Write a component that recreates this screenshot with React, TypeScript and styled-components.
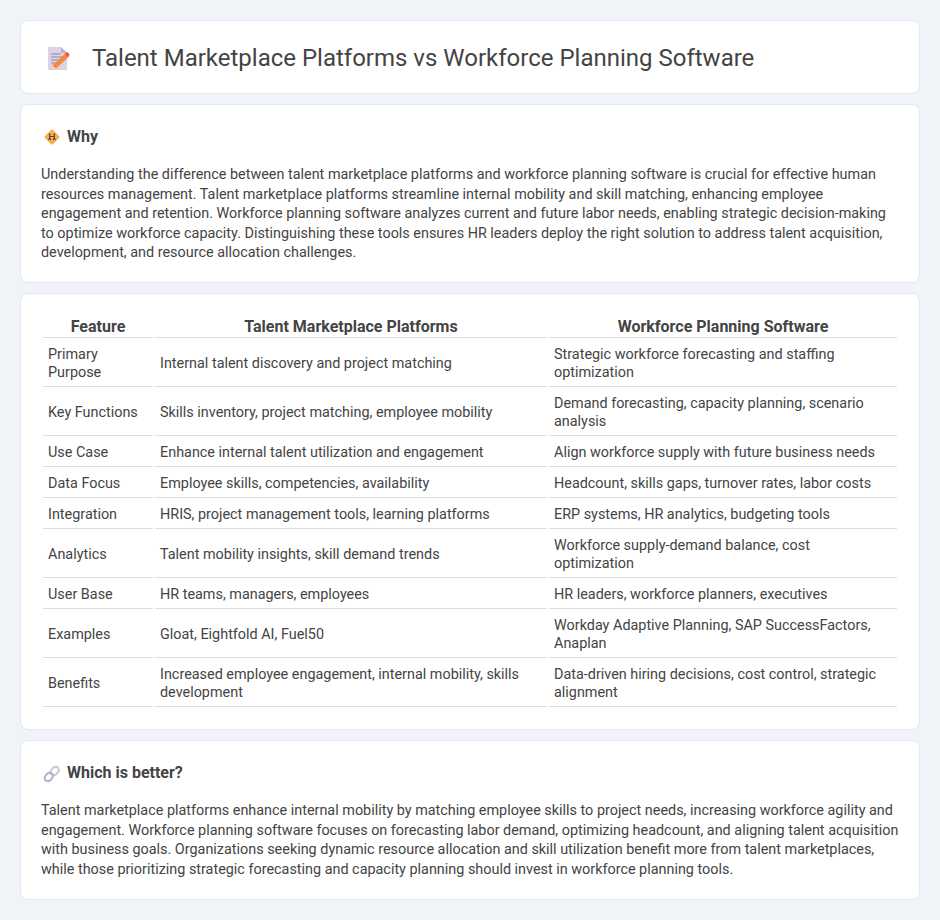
import React from "react";
import styled, { createGlobalStyle } from "styled-components";

const Global = createGlobalStyle`
  html, body { margin: 0; padding: 0; background: #f0f4f9; }
  body { font-family: Roboto, "Liberation Sans", sans-serif; color: #444; }
`;
const Page = styled.main`
  display: flex; flex-direction: column; gap: 10px; padding: 20px;
`;
const Card = styled.section`
  background: #fff; border: 1px solid #e2e8f0; border-radius: 8px; padding: 21px 20px 19.5px;
`;
const TitleCard = styled(Card)`
  display: flex; align-items: center; gap: 19px; padding: 18px 20px;
`;
const Title = styled.h1`
  margin: 0; padding-top: 2px; font-size: 24px; line-height: 34px; font-weight: 400; color: #444;
`;
const Heading = styled.h2`
  display: flex; align-items: center; gap: 6px; margin: 0 0 17px; font-size: 16px; line-height: 22px; font-weight: 700; color: #444;
`;
const Text = styled.p`
  margin: 0; font-size: 14.4px; line-height: 19.5px; color: #444;
`;
const TableCard = styled(Card)`
  padding: 20px;
`;
const Table = styled.table`
  width: 100%; table-layout: fixed; border-collapse: separate; border-spacing: 2px; font-size: 14.4px; line-height: 18px; color: #444;
`;
const Th = styled.th<{ $w?: string }>`
  padding: 0 5px; font-size: 16px; line-height: 21px; font-weight: 700; text-align: center; border-bottom: 1px solid #ddd; width: ${p => p.$w ?? "auto"};
`;
const Td = styled.td`
  padding: 6px 5px 4px; border-bottom: 1px solid #ddd; text-align: left;
`;

const DocIcon = () => (
  <svg width="32" height="32" viewBox="0 0 32 32">
    <path d="M7 6h13l6 6v17H7z" fill="#dcd3e6" />
    <path d="M20 6l6 6h-6z" fill="#bdb2cb" />
    <path d="M10 13h10M10 16h12M10 19h9M10 22h5" stroke="#8f8a9b" strokeWidth="1.1" />
    <path d="M11.500 24.500L23.500 13l3.500 3.500L15 27.500 10 29z" fill="#f58a3c" />
    <path d="M23.500 13l1.600-1.600a1.200 1.200 0 0 1 1.600 0l1.500 1.500a1.200 1.200 0 0 1 0 1.600L27 16.500z" fill="#f0564a" />
    <path d="M11.500 24.500l3.500 3-5 1.500z" fill="#f6d7ae" />
  </svg>
);
const WhyIcon = () => (
  <svg width="20" height="20" viewBox="0 0 20 20">
    <rect x="5.300" y="4.300" width="11.400" height="11.400" rx="1.500" transform="rotate(45 11 10)" fill="#f9ae4b" />
    <circle cx="8.700" cy="7.400" r="1" fill="#4d4347" />
    <circle cx="13.300" cy="7.400" r="1" fill="#4d4347" />
    <path d="M8.700 8.500v2.500M7.600 13l1.100-2 1.100 2M13.300 8.500v2.500M12.200 13l1.100-2 1.100 2M9 9.500h4" stroke="#4d4347" strokeWidth="1.100" fill="none" />
  </svg>
);
const LinkIcon = () => (
  <svg width="20" height="20" viewBox="0 0 20 20" fill="none">
    <rect x="10.500" y="3.500" width="6.500" height="9" rx="3.250" transform="rotate(45 13.750 8)" stroke="#cfc4d9" strokeWidth="2" />
    <rect x="4.500" y="9.500" width="6.500" height="9" rx="3.250" transform="rotate(45 7.750 14)" stroke="#b9aec6" strokeWidth="2" />
  </svg>
);

const rows: [string, string, string][] = [
  ["Primary Purpose", "Internal talent discovery and project matching", "Strategic workforce forecasting and staffing optimization"],
  ["Key Functions", "Skills inventory, project matching, employee mobility", "Demand forecasting, capacity planning, scenario analysis"],
  ["Use Case", "Enhance internal talent utilization and engagement", "Align workforce supply with future business needs"],
  ["Data Focus", "Employee skills, competencies, availability", "Headcount, skills gaps, turnover rates, labor costs"],
  ["Integration", "HRIS, project management tools, learning platforms", "ERP systems, HR analytics, budgeting tools"],
  ["Analytics", "Talent mobility insights, skill demand trends", "Workforce supply-demand balance, cost optimization"],
  ["User Base", "HR teams, managers, employees", "HR leaders, workforce planners, executives"],
  ["Examples", "Gloat, Eightfold AI, Fuel50", "Workday Adaptive Planning, SAP SuccessFactors, Anaplan"],
  ["Benefits", "Increased employee engagement, internal mobility, skills development", "Data-driven hiring decisions, cost control, strategic alignment"],
];

export default function App() {
  return (
    <Page>
      <Global />
      <TitleCard>
        <DocIcon />
        <Title>Talent Marketplace Platforms vs Workforce Planning Software</Title>
      </TitleCard>
      <Card>
        <Heading><WhyIcon />Why</Heading>
        <Text>Understanding the difference between talent marketplace platforms and workforce planning software is crucial for effective human resources management. Talent marketplace platforms streamline internal mobility and skill matching, enhancing employee engagement and retention. Workforce planning software analyzes current and future labor needs, enabling strategic decision-making to optimize workforce capacity. Distinguishing these tools ensures HR leaders deploy the right solution to address talent acquisition, development, and resource allocation challenges.</Text>
      </Card>
      <TableCard>
        <Table>
          <thead>
            <tr>
              <Th $w="100px">Feature</Th>
              <Th $w="382px">Talent Marketplace Platforms</Th>
              <Th>Workforce Planning Software</Th>
            </tr>
          </thead>
          <tbody>
            {rows.map(r => (
              <tr key={r[0]}>
                <Td>{r[0]}</Td>
                <Td>{r[1]}</Td>
                <Td>{r[2]}</Td>
              </tr>
            ))}
          </tbody>
        </Table>
      </TableCard>
      <Card>
        <Heading><LinkIcon />Which is better?</Heading>
        <Text>Talent marketplace platforms enhance internal mobility by matching employee skills to project needs, increasing workforce agility and engagement. Workforce planning software focuses on forecasting labor demand, optimizing headcount, and aligning talent acquisition with business goals. Organizations seeking dynamic resource allocation and skill utilization benefit more from talent marketplaces, while those prioritizing strategic forecasting and capacity planning should invest in workforce planning tools.</Text>
      </Card>
    </Page>
  );
}
